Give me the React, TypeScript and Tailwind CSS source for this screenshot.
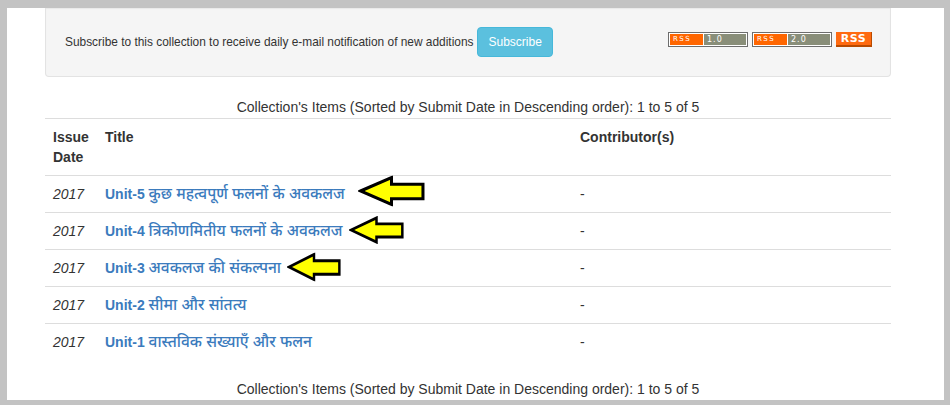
import React from "react";

type Item = {
  year: string;
  unit: string;
  title: string;
  arrow?: { w: number; h: number; gap: number; dy: number };
};

const items: Item[] = [
  { year: "2017", unit: "Unit-5", title: "कुछ महत्वपूर्ण फलनों के अवकलज", arrow: { w: 67, h: 31, gap: 13, dy: -3 } },
  { year: "2017", unit: "Unit-4", title: "त्रिकोणमितीय फलनों के अवकलज", arrow: { w: 55, h: 28, gap: 6, dy: -1 } },
  { year: "2017", unit: "Unit-3", title: "अवकलज की संकल्पना", arrow: { w: 54, h: 29, gap: 6, dy: -1 } },
  { year: "2017", unit: "Unit-2", title: "सीमा और सांतत्य" },
  { year: "2017", unit: "Unit-1", title: "वास्तविक संख्याएँ और फलन" },
];

function Arrow({ w, h, gap, dy }: { w: number; h: number; gap: number; dy: number }) {
  return (
    <svg
      width={w}
      height={h}
      viewBox="0 0 66 30"
      preserveAspectRatio="none"
      className="absolute left-full top-1/2 max-w-none"
      style={{ marginLeft: gap, height: h, transform: `translateY(calc(-50% + ${dy}px))` }}
    >
      <polygon
        points="2.5,15 33,2 33,8.5 64,8.5 64,22.5 33,22.5 33,28"
        fill="#ffff00"
        stroke="#000"
        strokeWidth="3"
        strokeLinejoin="miter"
      />
    </svg>
  );
}

function RssBadge({ version }: { version: string }) {
  return (
    <span className="flex h-[15px] w-[80px] border border-[#6d6d6d] bg-white p-px">
      <span className="flex w-[33px] items-center bg-[#ff6600] pl-[3px] text-[7px] leading-none tracking-[1.5px] text-white [font-family:'DejaVu_Sans',sans-serif]">
        RSS
      </span>
      <span className="ml-px flex flex-1 items-center bg-[#898e79] pl-[3px] text-[8px] leading-none tracking-[1px] text-white [font-family:'DejaVu_Sans',sans-serif]">
        {version}
      </span>
    </span>
  );
}

function Caption() {
  return (
    <p className="text-center text-[14px] leading-[20px] text-[#333]">
      Collection's Items (Sorted by Submit Date in Descending order): 1 to 5 of 5
    </p>
  );
}

export default function App() {
  return (
    <div className="flex h-[405px] w-[950px] bg-[#c3c3c3] pb-[5px] pl-[7px] pr-[6px] pt-[8px] [font-family:'Liberation_Sans','Noto_Sans',sans-serif]">
      <div className="h-full flex-1 overflow-hidden bg-white pl-[38px]">
        <div className="w-[846px]">
          <div className="flex h-[69px] items-center rounded-b-[4px] border-x border-b border-[#e3e3e3] bg-[#f5f5f5] pl-[19px] pr-[18px] shadow-[inset_0_1px_1px_rgba(0,0,0,0.05)]">
            <span className="text-[11.9px] leading-[20px] text-[#333]">
              Subscribe to this collection to receive daily e-mail notification of new additions
            </span>
            <button
              type="button"
              className="ml-[4px] h-[30px] rounded-[4px] border border-[#46b8da] bg-[#5bc0de] px-[10px] text-[12px] text-white"
            >
              Subscribe
            </button>
            <div className="mb-[5px] ml-auto flex items-center gap-[4px]">
              <RssBadge version="1.0" />
              <RssBadge version="2.0" />
              <span className="flex h-[15px] w-[36px] items-center justify-center border-b-2 border-r border-[#b84a00] bg-[#ff6a10] text-[11px] font-bold leading-none tracking-[0.5px] text-white [font-family:'DejaVu_Sans',sans-serif]">
                RSS
              </span>
            </div>
          </div>

          <div className="mt-[20px]">
            <Caption />
          </div>

          <table className="mt-px w-full border-collapse text-[14px] leading-[20px] text-[#333]">
            <thead>
              <tr className="border-t border-[#ddd] text-left align-top">
                <th className="w-[52px] p-[8px] font-bold">Issue Date</th>
                <th className="w-[475px] p-[8px] font-bold">Title</th>
                <th className="p-[8px] font-bold">Contributor(s)</th>
              </tr>
            </thead>
            <tbody>
              {items.map((item) => (
                <tr key={item.unit} className="border-t border-[#ddd]">
                  <td className="p-[8px] italic">{item.year}</td>
                  <td className="p-[8px]">
                    <span className="relative text-[#3b7bbd]">
                      <span className="font-bold">{item.unit}</span>{" "}
                      <span className="text-[15.5px] font-medium">{item.title}</span>
                      {item.arrow ? <Arrow {...item.arrow} /> : null}
                    </span>
                  </td>
                  <td className="p-[8px]">-</td>
                </tr>
              ))}
            </tbody>
          </table>

          <div className="mt-[19px]">
            <Caption />
          </div>
        </div>
      </div>
    </div>
  );
}
